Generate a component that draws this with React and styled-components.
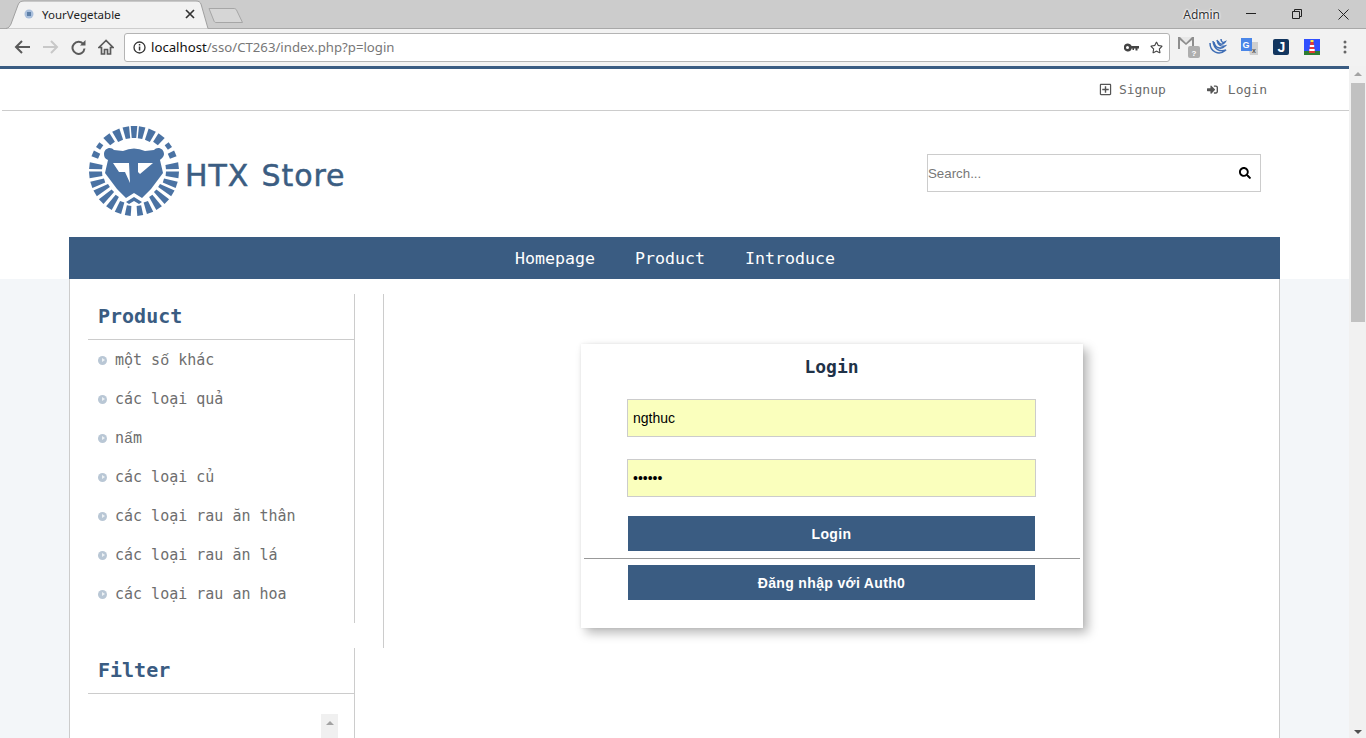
import React from "react";
import styled, { createGlobalStyle } from "styled-components";
import { FaRegPlusSquare, FaSignInAlt, FaSearch, FaRegStar } from "react-icons/fa";

const Global = createGlobalStyle`
  html, body { margin: 0; padding: 0; height: 738px; overflow: hidden; background: #fff; }
  #root { height: 738px; }
  * { box-sizing: border-box; }
`;

const Window = styled.div`display:flex;flex-direction:column;width:1366px;height:738px;overflow:hidden;font-family:"Noto Sans",sans-serif;`;
const TabStrip = styled.div`display:flex;height:29px;background:#cccccc;border-bottom:1px solid #a8a8a8;padding-left:6px;flex:none;`;
const Tab = styled.div`position:relative;width:203px;height:29px;display:flex;align-items:center;padding:0 14px 1px 18px;font-size:11.5px;color:#222;flex:none;
  > svg.shape{position:absolute;left:0;top:0;}
  > *:not(.shape){position:relative;}`;
const TabTitle = styled.span`margin-left:8px;flex:1;`;
const NewTab = styled.svg`margin:7px 0 0 -1px;flex:none;`;
const WinArea = styled.div`margin-left:auto;display:flex;align-items:center;height:28px;`;
const UserName = styled.span`font-size:12px;color:#333;text-shadow:0 0 2px #fff,0 0 2px #fff,0 0 3px #fff;margin-right:26px;`;
const WinBtn = styled.svg`margin-right:${p=>p.$mr}px;flex:none;`;

const Toolbar = styled.div`display:flex;align-items:center;height:37px;background:#f2f2f2;flex:none;padding:0 0 1px 14px;`;
const NavBtn = styled.svg`margin-right:${p=>p.$mr||0}px;flex:none;`;
const Omnibox = styled.div`display:flex;align-items:center;width:1046px;height:29px;background:#fff;border:1px solid #b4b4b4;border-radius:3px;padding:0 5px 0 8px;margin-left:10px;flex:none;`;
const Url = styled.div`flex:1;margin-left:5px;font-size:13.2px;color:#777;white-space:nowrap;`;
const UrlHost = styled.span`color:#111;`;
const OmniIcon = styled.span`display:flex;margin-right:${p=>p.$mr||0}px;color:#444;`;
const Exts = styled.div`display:flex;align-items:center;margin-left:8px;`;
const Ext = styled.svg`flex:none;margin-right:${p=>p.$mr||0}px;`;

const Viewport = styled.div`display:flex;height:672px;flex:none;`;
const Page = styled.div`width:1349px;height:672px;overflow:hidden;border-top:3px solid #3a5c82;flex:none;background:#fff;font-family:"DejaVu Sans Mono",monospace;`;
const TopBar = styled.div`display:flex;justify-content:flex-end;align-items:center;gap:41px;height:42px;margin-left:2px;padding-right:82px;border-bottom:1px solid #ccc;`;
const TopLink = styled.a`display:flex;align-items:center;font-size:13px;color:#6b6b6b;svg{color:#555;margin-right:${p=>p.$gap}px;}`;
const Header = styled.header`display:flex;align-items:center;justify-content:space-between;height:126px;padding:0 88px 0 89px;`;
const Logo = styled.div`display:flex;align-items:center;margin-bottom:6px;`;
const LogoText = styled.span`font-family:"DejaVu Sans",sans-serif;font-size:30px;color:#3b5d82;margin:9px 0 0 6px;letter-spacing:.9px;word-spacing:2px;-webkit-text-stroke:.5px #3b5d82;`;
const Search = styled.div`display:flex;align-items:center;width:334px;height:38px;border:1px solid #ccc;padding-right:9px;margin-bottom:2px;`;
const SearchInput = styled.input`flex:1;border:0;outline:0;padding:0;font:13.3px "Liberation Sans",sans-serif;color:#000;background:transparent;&::placeholder{color:#777;opacity:1;}`;
const Shell = styled.div`margin-left:69px;width:1211px;height:${p=>p.$fill?"100%":"auto"};`;
const Nav = styled.nav`display:flex;justify-content:center;align-items:center;gap:40px;height:42px;background:#3a5c82;padding-left:1px;`;
const NavLink = styled.a`font-size:16.6px;color:#fff;`;
const Lower = styled.div`background:#f3f6f9;height:${672 - 3 - 210}px;`;
const Content = styled.div`display:flex;gap:28px;width:1211px;height:100%;background:#fff;border:solid #ccc;border-width:0 1px;padding-top:15px;`;
const Sidebar = styled.aside`width:285px;padding-left:18px;flex:none;`;
const SideBox = styled.section`border-right:1px solid #ccc;height:${p=>p.$h}px;margin-bottom:25px;`;
const SideTitle = styled.h3`margin:0;height:46px;padding:0 0 2px 10px;display:flex;align-items:center;font-size:20px;font-weight:700;color:#3a5c82;border-bottom:1px solid #ccc;`;
const List = styled.ul`margin:0;padding:0;list-style:none;`;
const Item = styled.li`display:flex;align-items:center;height:39px;padding:1px 0 0 10px;font-size:15px;color:#6e6e6e;`;
const ItemText = styled.span`white-space:pre;line-height:18px;height:18px;`;
const Precomposed = styled.span`font-family:"Liberation Mono",monospace;line-height:0;`;
const Bullet = styled.i`position:relative;width:9px;height:9px;margin-right:8px;border-radius:50%;background:#b9c7d5;flex:none;&::after{content:"";position:absolute;left:3.500px;top:2.500px;border:2px solid transparent;border-left:3px solid #eef2f5;}`;
const Scroller = styled.div`margin:20px 0 0 233px;width:17px;height:40px;background:#f0f0f0;display:flex;justify-content:center;padding-top:7px;&::before{content:"";width:0;height:0;border:4px solid transparent;border-top:0;border-bottom:4px solid #a3a3a3;}`;
const Main = styled.main`flex:1;height:354px;border-left:1px solid #ccc;display:flex;justify-content:center;padding-top:50px;`;
const Card = styled.div`width:502px;height:284px;background:#fff;box-shadow:5px 5px 10px rgba(0,0,0,.28),0 0 3px rgba(0,0,0,.08);display:flex;flex-direction:column;margin-left:1px;`;
const CardTitle = styled.h2`margin:0 0 11px;height:44px;padding-right:1px;display:flex;align-items:center;justify-content:center;font-size:18px;font-weight:700;color:#1f3248;`;
const Field = styled.input`display:block;width:409px;height:38px;margin:0 0 ${p=>p.$mb}px 46px;padding:0 5px;border:1px solid #ccc;background:#faffbd;outline:0;font:14px "Liberation Sans",Arial,sans-serif;color:#000;`;
const Submit = styled.button`display:block;width:407px;height:35px;margin-left:47px;border:0;background:#3a5c82;color:#fff;font:700 14px "Liberation Sans",Arial,sans-serif;letter-spacing:.35px;padding:0;flex:none;`;
const Rule = styled.hr`margin:7px 3px 6px;height:1px;width:496px;border:0;background:#999;flex:none;`;
const ScrollBar = styled.div`position:relative;width:17px;height:672px;background:#f1f1f1;flex:none;`;
const Thumb = styled.div`position:absolute;left:2px;top:17px;width:14px;height:239px;background:#c1c1c1;`;
const Arrow = styled.i`position:absolute;left:5px;${p=>p.$up?"top:6px;border-bottom:4px solid #a3a3a3;":"bottom:4px;border-top:4px solid #505050;"}width:0;height:0;border-left:4px solid transparent;border-right:4px solid transparent;`;

const rays = [
  [0,4.2,33],[10.5,4.2,33],[-10.5,4.2,33],[24,5,33],[-24,5,33],[38,5,35],[-38,5,35],
  [54,3.6,40],[-54,3.6,40],[67,4,38],[-67,4,38],[83,4.3,32],[-83,4.3,32],[95,4.3,32],[-95,4.3,32],
  [108,4.3,31],[-108,4.3,31],[120,4.3,29],[-120,4.3,29],[133,4.3,29],[-133,4.3,29],
  [146,4.3,30],[-146,4.3,30],[159,4.3,33],[-159,4.3,33],[172,3.8,35],[-172,3.8,35],
];
const pt = (a, r) => { const t=(a-90)*Math.PI/180; return `${(49+r*Math.cos(t)).toFixed(2)},${(49+r*Math.sin(t)).toFixed(2)}`; };

const LionMark = () => (
  <svg width="90" height="90" viewBox="4 4 90 90" fill="#4a72a3">
    {rays.map(([a,w,r],i)=>(
      <polygon key={i} points={`${pt(a-w*(r/45+.2),r)} ${pt(a+w*(r/45+.2),r)} ${pt(a+w,45)} ${pt(a-w,45)}`} />
    ))}
    <path fillRule="evenodd" d="M19,32C19,26 26,24 29,28L38,29Q49,24 60,29L69,28C72,24 79,26 79,32C79,35 76,37 75,38L78,51L66,67L57,76L49,71L41,76L32,67L20,51L23,38C20,37 19,35 19,32ZM28,41L44,41L45,61L40,50L34,50ZM53,41L68,41L55,52L53,50Z"/>
    <path d="M41,80L49,75L57,80L54,82L49,79L44,82Z"/>
  </svg>
);

/* DejaVu Sans Mono has no ố or ấ: those two letters take another mono face of the same advance. */
const withFallback = t => t.split(/([ốấ])/).map((part,i)=> i%2 ? <Precomposed key={i}>{part}</Precomposed> : part);

export default function App() {
  return (
    <Window>
      <Global />
      <TabStrip>
        <Tab>
          <svg className="shape" width="203" height="29" viewBox="0 0 203 29"><path d="M0,28.5C3,28 4,26 5,24L12,5C13,2 15,1 18,1L190,1C193,1 194,2 195,4L202,28.5" fill="#f2f2f2" stroke="#a0a0a0"/></svg>
          <svg width="10" height="10" viewBox="0 0 10 10"><circle cx="5" cy="5" r="4.500" fill="#a9bfdc"/><rect x="3" y="3" width="4" height="4" fill="#5d7fa8"/></svg>
          <TabTitle>YourVegetable</TabTitle>
          <svg width="10" height="10" viewBox="0 0 10 10"><path d="M1,1L9,9M9,1L1,9" stroke="#333" strokeWidth="1.700"/></svg>
        </Tab>
        <NewTab width="36" height="17" viewBox="0 0 36 17"><path d="M1,1.500L26,1.500C27,1.500 28,2 28.500,3L34.500,15.500L8,15.500C7,15.500 6.500,15 6,14Z" fill="#d6d6d6" stroke="#a6a6a6"/></NewTab>
        <WinArea>
          <UserName>Admin</UserName>
          <WinBtn $mr={36} width="10" height="2" viewBox="0 0 10 2"><rect width="10" height="1" fill="#222"/></WinBtn>
          <WinBtn $mr={36} width="10" height="10" viewBox="0 0 10 10"><path d="M.5,2.500H7.500V9.500H.5ZM2.500,2.500V.5H9.500V7.500H7.500" fill="none" stroke="#222"/></WinBtn>
          <WinBtn $mr={17} width="11" height="11" viewBox="0 0 11 11"><path d="M.5,.5L10.500,10.500M10.500,.5L.5,10.500" stroke="#222"/></WinBtn>
        </WinArea>
      </TabStrip>
      <Toolbar>
        <NavBtn $mr={11} width="17" height="14" viewBox="0 0 17 14"><path d="M16,7H3M8,1L2,7L8,13" fill="none" stroke="#5a5a5a" strokeWidth="2"/></NavBtn>
        <NavBtn $mr={12} width="17" height="14" viewBox="0 0 17 14"><path d="M1,7H14M9,1L15,7L9,13" fill="none" stroke="#c8c8c8" strokeWidth="2"/></NavBtn>
        <NavBtn $mr={12} width="15" height="15" viewBox="0 0 15 15"><path d="M12.500,4.500A6,6 0 1 0 13.500,8.500" fill="none" stroke="#5a5a5a" strokeWidth="2"/><path d="M9,5.500H14.500V0Z" fill="#5a5a5a"/></NavBtn>
        <NavBtn width="16" height="16" viewBox="0 0 16 16"><path d="M8,1.500L1,8.500H3.500V15H6.500V10.500H9.500V15H12.500V8.500H15Z" fill="none" stroke="#5a5a5a" strokeWidth="1.700"/></NavBtn>
        <Omnibox>
          <svg width="13" height="13" viewBox="0 0 13 13"><circle cx="6.500" cy="6.500" r="5.500" fill="none" stroke="#333" strokeWidth="1.300"/><rect x="5.800" y="5.500" width="1.500" height="4" fill="#333"/><rect x="5.800" y="3" width="1.500" height="1.500" fill="#333"/></svg>
          <Url><UrlHost>localhost</UrlHost>/sso/CT263/index.php?p=login</Url>
          <OmniIcon $mr={11}><svg width="15" height="9" viewBox="0 0 15 9"><path fillRule="evenodd" d="M4,0.500A4,4 0 0 1 7.700,3H15V5.500H13.500V7.500H11.500V5.500H10V7H8.500V5.500H7.700A4,4 0 1 1 4,0.500ZM3.500,3A1.500,1.500 0 1 0 3.500,6A1.500,1.500 0 1 0 3.500,3Z" fill="#444"/></svg></OmniIcon>
          <OmniIcon $mr={1}><FaRegStar size={13}/></OmniIcon>
        </Omnibox>
        <Exts>
          <Ext $mr={8} width="23" height="22" viewBox="0 0 23 22"><path d="M0,1H16V13H0Z" fill="#8e8e8e"/><path d="M2,1L8,7L14,1" fill="#e8e8e8"/><path d="M2,13V4L8,9L14,4V13Z" fill="#f2f2f2"/><rect x="10" y="10" width="12" height="12" rx="2" fill="#aeaeae"/><text x="16" y="19.500" textAnchor="middle" fontSize="8" fontFamily="Liberation Sans" fontWeight="700" fill="#fff">?</text></Ext>
          <Ext $mr={14} width="18" height="18" viewBox="0 0 18 18"><path d="M1,5C1,14 10,18 17,12C11,14 5,12 4,3M5,4C6,10 12,12 16,8C12,9 9,7 8,2M9,3C10,7 14,7 16,4C14,5 12,4 12,1" fill="none" stroke="#3e6db5" strokeWidth="1.500"/></Ext>
          <Ext $mr={14} width="18" height="18" viewBox="0 0 18 18"><path d="M6,4H17V17H9Z" fill="#cfcfcf"/><rect width="11" height="13" fill="#4a86e8"/><text x="5" y="10" textAnchor="middle" fontSize="9" fontWeight="700" fontFamily="Liberation Sans" fill="#fff">G</text><text x="13" y="15" textAnchor="middle" fontSize="7" fontWeight="700" fontFamily="Liberation Sans" fill="#555">x</text></Ext>
          <Ext $mr={15} width="16" height="16" viewBox="0 0 16 16"><rect width="16" height="16" rx="2" fill="#13365f"/><text x="8.500" y="13" textAnchor="middle" fontSize="14" fontWeight="700" fontFamily="Liberation Sans" fill="#fff">J</text></Ext>
          <Ext $mr={23} width="16" height="16" viewBox="0 0 16 16"><rect width="16" height="16" fill="#304ffe"/><rect y="12" width="16" height="4" fill="#2e7d32"/><path d="M6.500,3H9.500L11,14H5Z" fill="#e53935"/><rect x="5.800" y="6" width="4.400" height="2" fill="#fff"/><rect x="5.300" y="10" width="5.400" height="2" fill="#fff"/><rect x="6.500" y="1" width="3" height="2" fill="#ffeb3b"/></Ext>
          <Ext width="4" height="14" viewBox="0 0 4 14"><circle cx="2" cy="2" r="1.500" fill="#666"/><circle cx="2" cy="7" r="1.500" fill="#666"/><circle cx="2" cy="12" r="1.500" fill="#666"/></Ext>
        </Exts>
      </Toolbar>
      <Viewport>
        <Page>
          <TopBar>
            <TopLink $gap={7}><FaRegPlusSquare size={13}/>Signup</TopLink>
            <TopLink $gap={10}><FaSignInAlt size={11}/>Login</TopLink>
          </TopBar>
          <Header>
            <Logo><LionMark/><LogoText>HTX Store</LogoText></Logo>
            <Search>
              <SearchInput placeholder="Search..." />
              <FaSearch size={12} color="#000"/>
            </Search>
          </Header>
          <Shell>
            <Nav>
              <NavLink>Homepage</NavLink>
              <NavLink>Product</NavLink>
              <NavLink>Introduce</NavLink>
            </Nav>
          </Shell>
          <Lower>
            <Shell $fill>
              <Content>
                <Sidebar>
                  <SideBox $h={329}>
                    <SideTitle>Product</SideTitle>
                    <List>
                      {["một số khác","các loại quả","nấm","các loại củ","các loại rau ăn thân","các loại rau ăn lá","các loại rau an hoa"].map(t=>(
                        <Item key={t}><Bullet/><ItemText>{withFallback(t)}</ItemText></Item>
                      ))}
                    </List>
                  </SideBox>
                  <SideBox $h={200}>
                    <SideTitle>Filter</SideTitle>
                    <Scroller/>
                  </SideBox>
                </Sidebar>
                <Main>
                  <Card>
                    <CardTitle>Login</CardTitle>
                    <Field $mb={22} defaultValue="ngthuc" readOnly/>
                    <Field $mb={19} type="password" defaultValue="123456" readOnly/>
                    <Submit>Login</Submit>
                    <Rule/>
                    <Submit>Đăng nhập với Auth0</Submit>
                  </Card>
                </Main>
              </Content>
            </Shell>
          </Lower>
        </Page>
        <ScrollBar><Arrow $up/><Thumb/><Arrow/></ScrollBar>
      </Viewport>
    </Window>
  );
}
